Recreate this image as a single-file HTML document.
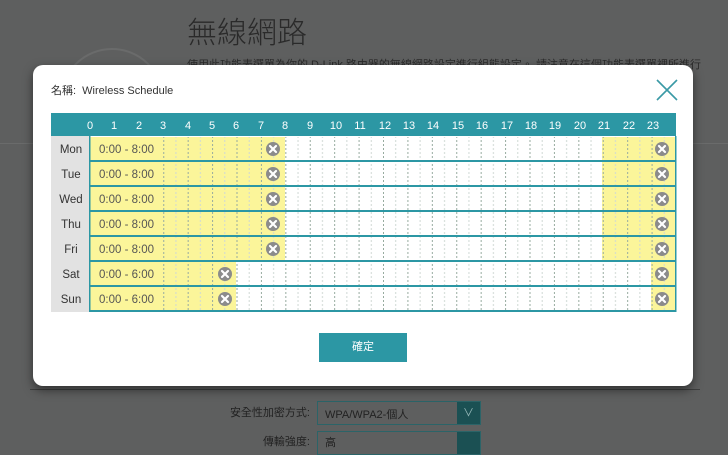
<!DOCTYPE html>
<html><head><meta charset="utf-8"><style>
html,body{margin:0;padding:0;width:728px;height:444px;overflow:hidden;background:#5e5f5f;font-family:"Liberation Sans","Noto Sans CJK TC",sans-serif}
.abs{position:absolute}
</style></head><body>
<div class="abs" style="left:0;top:0;width:728px;height:444px;background:#5e5f5f"></div>
<div class="abs" style="left:187px;top:8px;font-size:30px;color:#2a2a2a;font-family:'Noto Sans CJK TC',sans-serif;font-weight:300">無線網路</div>
<div class="abs" style="left:187px;top:56px;font-size:11px;color:#2a2a2a;white-space:nowrap">使用此功能表選單為你的 D-Link 路由器的無線網路設定進行組態設定。 請注意在這個功能表選單裡所進行</div>
<div class="abs" style="left:60px;top:48px;width:100px;height:100px;border-radius:50%;border:2px solid #6a6b6b"></div>
<div class="abs" style="left:0;top:143px;width:728px;height:1px;background:#6a6b6b"></div>
<div class="abs" style="left:30px;top:389px;width:670px;height:1px;background:#3e3f3f"></div>
<div class="abs" style="left:200px;top:404px;width:110px;text-align:right;font-size:11px;color:#222">安全性加密方式:</div>
<div class="abs" style="left:317px;top:401px;width:162px;height:22px;border:1px solid #2b6468;background:#5e5f5f"><span style="position:absolute;left:7px;top:4px;font-size:11px;color:#222">WPA/WPA2-個人</span><div style="position:absolute;right:0;top:0;width:23px;height:22px;background:#1b5053;color:#9bb;font-size:11px;text-align:center;line-height:22px">∨</div></div>
<div class="abs" style="left:200px;top:433px;width:110px;text-align:right;font-size:11px;color:#222">傳輸強度:</div>
<div class="abs" style="left:317px;top:431px;width:162px;height:22px;border:1px solid #2b6468"><span style="position:absolute;left:7px;top:2px;font-size:11px;color:#222">高</span><div style="position:absolute;right:0;top:0;width:23px;height:22px;background:#1b5053"></div></div>

<div class="abs" style="left:33px;top:65px;width:660px;height:321px;background:#fff;border-radius:10px;box-shadow:0 4px 10px rgba(0,0,0,.5)"></div>
<div class="abs" style="left:51px;top:82px;font-size:11px;color:#333">名稱:&nbsp; Wireless Schedule</div>
<svg class="abs" style="left:655px;top:78px" width="24" height="24"><path d="M2 2L22 22M22 2L2 22" stroke="#3a9aa6" stroke-width="1.6"/></svg>

<svg class="abs" style="left:0;top:0" width="728" height="444">
<defs>
<pattern id="g" x="90" y="0" width="24.4167" height="4" patternUnits="userSpaceOnUse">
<rect x="0" y="0" width="1" height="2" fill="#97ab9f"/>
<rect x="12.2" y="0" width="1" height="2" fill="#cfd8d4"/>
</pattern>
<g id="x"><circle r="7" fill="#8b8b8b"/><path d="M-3 -3L3 3M3 -3L-3 3" stroke="#fff" stroke-width="2.2" stroke-linecap="round"/></g>
</defs>
<rect x="51" y="113" width="625" height="23" fill="#2c97a4"/>
<rect x="51" y="136" width="39" height="176" fill="#e2e2e2"/>
<rect x="90" y="136" width="586" height="176" fill="#fff"/>
<g fill="#fbf59a">
<rect x="90" y="137" width="195" height="23"/><rect x="602" y="137" width="74" height="23"/>
<rect x="90" y="162" width="195" height="23"/><rect x="602" y="162" width="74" height="23"/>
<rect x="90" y="187" width="195" height="23"/><rect x="602" y="187" width="74" height="23"/>
<rect x="90" y="212" width="195" height="23"/><rect x="602" y="212" width="74" height="23"/>
<rect x="90" y="237" width="195" height="23"/><rect x="602" y="237" width="74" height="23"/>
<rect x="90" y="262" width="146" height="23"/><rect x="651" y="262" width="25" height="23"/>
<rect x="90" y="287" width="146" height="23"/><rect x="651" y="287" width="25" height="23"/>
</g>
<rect x="91" y="137" width="585" height="174" fill="url(#g)"/>
<rect x="91" y="137" width="70" height="174" fill="#fbf59a"/>
<g fill="#2c97a4">
<rect x="90" y="160" width="586" height="2"/><rect x="90" y="185" width="586" height="2"/>
<rect x="90" y="210" width="586" height="2"/><rect x="90" y="235" width="586" height="2"/>
<rect x="90" y="260" width="586" height="2"/><rect x="90" y="285" width="586" height="2"/>
<rect x="90" y="310" width="586" height="2"/>
<rect x="89" y="136" width="1.5" height="176"/><rect x="675" y="136" width="1.5" height="176"/>
</g>
<g font-family="Liberation Sans,sans-serif" font-size="11" fill="#fff" text-anchor="middle">
<text x="90" y="129">0</text><text x="114" y="129">1</text><text x="139" y="129">2</text><text x="163" y="129">3</text><text x="188" y="129">4</text><text x="212" y="129">5</text><text x="236" y="129">6</text><text x="261" y="129">7</text><text x="285" y="129">8</text><text x="310" y="129">9</text><text x="336" y="129">10</text><text x="360" y="129">11</text><text x="385" y="129">12</text><text x="409" y="129">13</text><text x="433" y="129">14</text><text x="458" y="129">15</text><text x="482" y="129">16</text><text x="507" y="129">17</text><text x="531" y="129">18</text><text x="555" y="129">19</text><text x="580" y="129">20</text><text x="604" y="129">21</text><text x="629" y="129">22</text><text x="653" y="129">23</text>
</g>
<g font-family="Liberation Sans,sans-serif" font-size="11.5" fill="#333" text-anchor="middle">
<text x="71" y="153">Mon</text><text x="71" y="178">Tue</text><text x="71" y="203">Wed</text><text x="71" y="228">Thu</text><text x="71" y="253">Fri</text><text x="71" y="278">Sat</text><text x="71" y="303">Sun</text>
</g>
<g font-family="Liberation Sans,sans-serif" font-size="11.5" fill="#555">
<text x="99" y="153">0:00 - 8:00</text><text x="99" y="178">0:00 - 8:00</text><text x="99" y="203">0:00 - 8:00</text><text x="99" y="228">0:00 - 8:00</text><text x="99" y="253">0:00 - 8:00</text><text x="99" y="278">0:00 - 6:00</text><text x="99" y="303">0:00 - 6:00</text>
</g>
<use href="#x" x="273" y="149"/><use href="#x" x="662" y="149"/>
<use href="#x" x="273" y="174"/><use href="#x" x="662" y="174"/>
<use href="#x" x="273" y="199"/><use href="#x" x="662" y="199"/>
<use href="#x" x="273" y="224"/><use href="#x" x="662" y="224"/>
<use href="#x" x="273" y="249"/><use href="#x" x="662" y="249"/>
<use href="#x" x="225" y="274"/><use href="#x" x="662" y="274"/>
<use href="#x" x="225" y="299"/><use href="#x" x="662" y="299"/>
</svg>
<div class="abs" style="left:319px;top:333px;width:88px;height:29px;background:#2c97a4;color:#fff;font-size:11px;text-align:center;line-height:29px">確定</div>
</body></html>
